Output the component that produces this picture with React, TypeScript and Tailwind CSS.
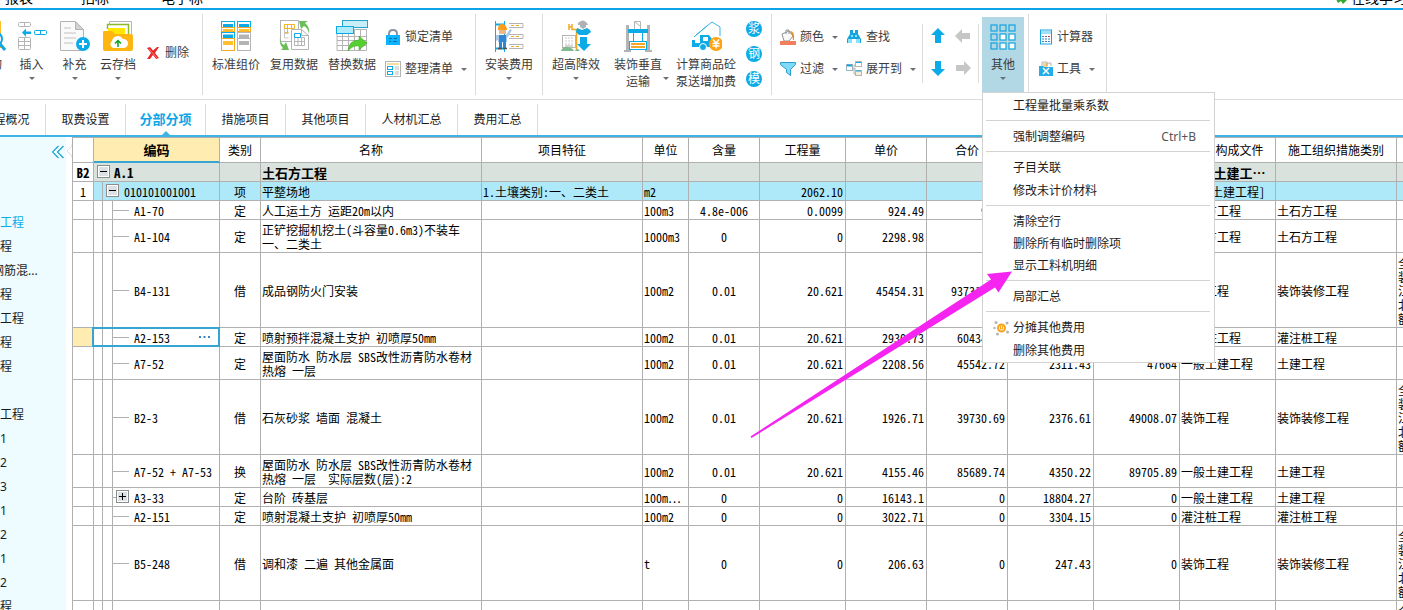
import { Fragment, type ReactNode } from "react";
import clsx from "clsx";

const ui = "font-['Noto_Sans','Noto_Sans_CJK_SC',sans-serif]";
const grid = "font-['Noto_Sans_Mono_CJK_SC','Noto_Sans_CJK_SC',monospace]";

/* ---------- icons ---------- */

const Svg = ({ w = 32, h = 32, children }: { w?: number; h?: number; children: ReactNode }) => (
  <svg width={w} height={h} viewBox={`0 0 ${w} ${h}`} fill="none" className="shrink-0" aria-hidden="true">
    {children}
  </svg>
);

const Caret = () => (
  <svg width="6" height="3" viewBox="0 0 6 3" className="shrink-0" aria-hidden="true">
    <path d="M0 0h6L3 3z" fill="#6b6f7a" />
  </svg>
);

const QueryIcon = () => (
  <Svg>
    <path d="M4 1h23v27H4z" fill="#ffc02e" />
    <circle cx="21" cy="19" r="7" fill="#fff" stroke="#12a5e0" strokeWidth="2" />
    <path d="M26 24l5 6" stroke="#12a5e0" strokeWidth="3" />
  </Svg>
);

const InsertIcon = () => (
  <Svg>
    <g stroke="#b4b4b4">
      <rect x="2.500" y="2.500" width="12" height="4" rx="1" />
      <path d="M8.500 2.500v4" />
      <rect x="2.500" y="17.500" width="12" height="12" rx="1" />
      <path d="M8.500 17.500v12M2.500 21.500h12M2.500 25.500h12" />
    </g>
    <path d="M6 12.500l4-4v3h5v2.500h-5v3z" fill="#0cabe8" />
    <rect x="18.500" y="10.500" width="12" height="4" rx="1" stroke="#0cabe8" />
    <path d="M24.500 10.500v4" stroke="#0cabe8" />
  </Svg>
);

const AppendIcon = () => (
  <Svg>
    <path d="M1.500 1.500h15l8 8v21h-23z" fill="#fafafa" stroke="#b4b4b4" />
    <path d="M16.500 1.500v8h8z" fill="#d2d2d2" stroke="#b4b4b4" />
    <path d="M5 8h7M5 13h12M5 18h12M5 23h9" stroke="#dedede" strokeWidth="2" />
    <circle cx="24" cy="24" r="7" fill="#0cabe8" />
    <path d="M20 24h8M24 20v8" stroke="#fff" strokeWidth="2" />
  </Svg>
);

const CloudIcon = () => (
  <Svg>
    <path d="M7.500 9V1.500h22V22" stroke="#b4b4b4" fill="#fff" />
    <path d="M5.500 9V4.500h21V20" stroke="#8cb82b" strokeWidth="1.500" fill="#fff" />
    <path d="M6 8h17v6H6z" fill="#ffe600" />
    <path d="M1 12q0-1 1-1h8l3 3h16q2 0 2 2v13q0 2-2 2H3q-2 0-2-2z" fill="#ffb510" />
    <path d="M11 28a4 4 0 0 1-1-7 6 6 0 0 1 11-2 4.500 4.500 0 0 1 1 9z" fill="#fff" />
    <path d="M16 27v-6M13 23.500l3-3 3 3" stroke="#14a01e" strokeWidth="1.500" />
  </Svg>
);

const RedCross = () => (
  <Svg w={12} h={12}>
    <path d="M0 1l3-1 3 3.500L10 0h2L8 6l4 5-3 1-3-4-3 4H0l4-6z" fill="#e8272a" />
    <path d="M2 2l8 9" stroke="#ff7460" />
  </Svg>
);

const StandardIcon = () => (
  <Svg>
    {[1.5, 17.5].map((x, i) => (
      <g key={x}>
        <rect x={x} y="1.500" width="13" height="6" stroke="#0cabe8" />
        <rect x={x + 1.5} y="4" width="10" height="3.500" fill="#0cabe8" />
        <rect x={x} y="7.500" width="13" height="4" stroke="#f5a623" />
        <rect x={x + 1.5} y="9" width="10" height="2.500" fill="#ffc02e" />
        <rect x={x} y="12.500" width="13" height="6" stroke={i ? "#b4b4b4" : "#0cabe8"} />
        <rect x={x + 1.5} y="14.500" width="10" height="3.500" fill={i ? "#b4b4b4" : "#0cabe8"} />
        <rect x={x} y="18.500" width="13" height="12" stroke={i ? "#b4b4b4" : "#f5a623"} />
        <rect x={x + 1.5} y="21" width="10" height="4" fill={i ? "#b4b4b4" : "#ffc02e"} />
      </g>
    ))}
  </Svg>
);

const ReuseIcon = () => (
  <Svg>
    <rect x="2.500" y="0.500" width="18" height="21" stroke="#b4b4b4" fill="#fff" />
    <path d="M6.500 4.500h10v4h-10zM6.500 4.500v8M9.500 4.500v8M13.500 4.500v4M6.500 12.500h4" stroke="#f5b32a" />
    <path d="M6.500 9v9h4M6.500 13.500h4" stroke="#c9c9c9" />
    <path d="M13.500 9.500h10l7 6v14h-17z" fill="#fff" stroke="#b4b4b4" />
    <path d="M23.500 9.500v6h7" stroke="#b4b4b4" />
    <path d="M16.500 17.500h10v8h-10zM20 17.500v8M23.500 17.500v8M16.500 21.500h10" stroke="#b4b4b4" />
    <path d="M16.500 13.500h6v4h-6z" stroke="#0cabe8" />
    <path d="M21 1h9l-3 2q5 4 4 11-1-6-5-8l-3 3z" fill="#6abf5b" />
    <path d="M2 17q0 6 4 8l2-3 3 8H3l2-2q-4-3-3-11z" fill="#6abf5b" />
  </Svg>
);

const ReplaceIcon = () => (
  <Svg w={34}>
    <path d="M2 9.500h29.500v21H2zM2 16.500h30M2 20.500h30M2 25.500h30M7.500 9v21M13.500 9v21M19.500 9v21M25.500 9v21" stroke="#b4b4b4" />
    <rect x="7.500" y="0.500" width="25" height="7" fill="#c9eef8" stroke="#25a3c8" />
    <rect x="1.500" y="6.500" width="17" height="7" fill="#aeebfb" stroke="#0cabe8" />
    <path d="M13 31q1-11 11-11v-4l8 7-8 7v-4q-6-1-11 5z" fill="#55d030" stroke="#3aa11c" strokeWidth="0.500" />
  </Svg>
);

const LockIcon = () => (
  <Svg w={16} h={16}>
    <path d="M4 8V5q0-4 4-4t4 4v3" stroke="#8a93a0" strokeWidth="2" />
    <rect x="1" y="6" width="14" height="10" fill="#0cb4ff" />
    <path d="M4 9.500h3M9 9.500h3M4 12.500h2M8 12.500h4" stroke="#0a6fa8" />
  </Svg>
);

const TidyIcon = () => (
  <Svg w={16} h={16}>
    <rect x="0.500" y="0.500" width="15" height="15" fill="#fff" stroke="#b4b4b4" />
    <path d="M2 3h12" stroke="#f5dfa0" strokeWidth="2" />
    <rect x="2.500" y="5.500" width="5" height="3" stroke="#0cabe8" />
    <rect x="2.500" y="10.500" width="5" height="3" stroke="#0cabe8" />
    <path d="M10 5h4v4h-4zM10 10h4v4h-4z" fill="#ddd" />
  </Svg>
);

const InstallIcon = () => (
  <Svg>
    <path d="M2.500 1v31M11.500 1v31" stroke="#0cabe8" />
    <path d="M2 4.500h10M2 28.500h10" stroke="#0cabe8" strokeWidth="2" />
    <path d="M16 3.500h14v4H16M16 14.500h14v4H16M16 24.500h14v4H16" stroke="#b4b4b4" />
    <path d="M18 5.500h3M23 5.500h3M18 16.500h3M23 16.500h3M18 26.500h3M23 26.500h3" stroke="#f5a623" />
    <path d="M5 9q0-5 4-5t5 5v1H5z" fill="#ff9d1c" />
    <path d="M6 10h7v4H6z" fill="#e7b98c" />
    <path d="M3 15h10l4-6 2 1-5 8v4H5v-2l-2 1z" fill="#a9c8e8" />
    <path d="M6 15h7v13h-3v-6H9v6H6z" fill="#2f86d3" />
    <path d="M5 28.500h4M10 28.500h4" stroke="#6b4a33" strokeWidth="1.500" />
  </Svg>
);

const HighIcon = () => (
  <Svg>
    <path d="M9 4v6M12 4v6M9 7h3M12 9.500h4.500V31" stroke="#f5a623" strokeWidth="1.500" />
    <rect x="2.500" y="15.500" width="13" height="12" fill="#fff" stroke="#b4b4b4" />
    <path d="M5 18h8M5 21h8M5 24h8" stroke="#c9c9c9" strokeDasharray="2 1" />
    <path d="M5 27h8v-2H5z" fill="#d6d6d6" />
    <path d="M1 31q2-5 7-4t6 4zM15 31q2-4 5 0z" fill="#7fb98e" />
    <path d="M18 3q5-5 9 0l1 2H18zM20 5h6v2l-3 2-3-2z" fill="#aeb2b5" />
    <path d="M17 8l5 2 5-2 3 2 1 2-4 3H19l-3-3z" fill="#0cabe8" />
    <path d="M20 17h7v7h4l-7 7-7-7h3z" fill="#0cabe8" />
  </Svg>
);

const VerticalIcon = () => (
  <Svg>
    <path d="M5.500 5v26M26.500 5v26" stroke="#b4b4b4" strokeWidth="3" />
    <path d="M2 31h7M23 31h7" stroke="#b4b4b4" strokeWidth="2" />
    <path d="M12.500 9V1.500h6V9M13 2l5 4" stroke="#b4b4b4" />
    <path d="M6 9h20v4H6z" fill="#0cabe8" />
    <path d="M11.500 12v10M20.500 12v10" stroke="#0cabe8" />
    <rect x="7.500" y="21.500" width="17" height="8" stroke="#0cabe8" fill="#fff" />
    <path d="M9 23h14v2H9zM9 26h14v2H9z" fill="#f5a623" />
  </Svg>
);

const PumpIcon = () => (
  <Svg>
    <path d="M6 15L22 2l8 5v9" stroke="#3ab5e0" />
    <path d="M4 17L18 5" stroke="#3ab5e0" />
    <path d="M2 20h3v3h5v-8h9l3 4v8H2z" fill="#0cabe8" />
    <path d="M13 17h5v4h-5z" fill="#fff" />
    <circle cx="13" cy="27" r="3.500" fill="#0cabe8" stroke="#fff" />
    <circle cx="26" cy="24" r="7" fill="#ffa312" />
    <path d="M23 19.500l3 3.500 3-3.500M26 23v5.500M22.500 23.500h7M22.500 26h7" stroke="#fff" strokeWidth="1.500" />
  </Svg>
);

const BucketIcon = () => (
  <Svg w={16} h={16}>
    <path d="M2 5l7-3 4 5-4 5H4z" fill="#fafafa" stroke="#8f9499" />
    <path d="M6 5V1h3v4" stroke="#8f9499" />
    <path d="M10 2q5 0 4 9h-1L12 6z" fill="#e0912f" />
    <path d="M0 12h16v4H0z" fill="#f47e5c" />
  </Svg>
);

const FunnelIcon = () => (
  <Svg w={16} h={16}>
    <path d="M0.500 1.500h15v2l-5 5v6l-4-3v-3l-6-5z" fill="#7fd9f7" stroke="#2a9cc9" />
  </Svg>
);

const BinocularsIcon = () => (
  <Svg w={16} h={16}>
    <path d="M4 1h3v3h2V1h3v4l3 5v4h-5v-4H6v4H1v-4l3-5z" fill="#12a5e0" />
    <path d="M2 10h4v4H2zM10 10h4v4h-4zM5 6h2v2H5zM9 6h2v2H9z" fill="#8ae1fa" />
  </Svg>
);

const ExpandIcon = () => (
  <Svg w={16} h={16}>
    <path d="M6 8h4M8 8V4h2M8 8v5h2" stroke="#b4b4b4" />
    <rect x="0.500" y="3.500" width="6" height="6" fill="#fff" stroke="#9fb3bf" />
    <rect x="9.500" y="0.500" width="6" height="5" fill="#fff" stroke="#b4b4b4" />
    <rect x="9.500" y="9.500" width="6" height="5" fill="#f7ecd8" stroke="#b4b4b4" />
    <path d="M1 4.500h5" stroke="#12a5e0" strokeWidth="2" />
    <path d="M10 10h5M10 1.500h5" stroke="#12a5e0" />
  </Svg>
);

const Arrow = ({ turn, color }: { turn: string; color: string }) => (
  <svg width="16" height="16" viewBox="0 0 16 16" className={turn} aria-hidden="true">
    <path d="M8 0l7 7h-4v8H5V7H1z" fill={color} />
  </svg>
);

const GridIcon = () => (
  <Svg w={26} h={26}>
    {[0, 9, 18].map((y) =>
      [0, 9, 18].map((x) => (
        <rect key={`${x}-${y}`} x={x + 1} y={y + 1} width="6" height="6" fill={x && y ? "#fff" : "none"} stroke="#12a5e0" strokeWidth="1.200" />
      ))
    )}
  </Svg>
);

const CalculatorIcon = () => (
  <Svg w={14} h={16}>
    <rect x="1.500" y="1" width="11" height="14" fill="#fff" stroke="#12a5e0" />
    <path d="M2 2h10v3H2z" fill="#9fe0f6" />
    <path d="M3 7.500h8M3 10h8M3 12.500h8" stroke="#3a7fc0" strokeDasharray="2 1" />
    <path d="M9 7h2v1H9z" fill="#e8272a" />
  </Svg>
);

const ToolsIcon = () => (
  <Svg w={14} h={16}>
    <path d="M3 5V1h5v4M8 5V2h4v3" fill="#fff" stroke="#b4b4b4" />
    <path d="M4 3h4M4 5h4" stroke="#f5a623" />
    <path d="M0 5h4l1 1h9v9H0z" fill="#22aee6" />
    <path d="M4 7l6 6M10 7l-6 6" stroke="#fff" strokeWidth="1.500" />
  </Svg>
);

const CoinIcon = () => (
  <Svg w={16} h={16}>
    <circle cx="8.500" cy="8" r="3.500" fill="#fff4d8" stroke="#f9a11b" strokeWidth="2" />
    <path d="M7.500 6v3h2V6" stroke="#f9a11b" />
    <g fill="#b4b4b4">
      <circle cx="3" cy="2.500" r="1.500" />
      <circle cx="14" cy="3" r="1.500" />
      <circle cx="1.500" cy="8" r="1.200" />
      <circle cx="14.500" cy="12" r="1.500" />
      <circle cx="4.500" cy="14" r="1.500" />
    </g>
  </Svg>
);

/* ---------- ribbon ---------- */

const BigButton = ({ icon, label, width = "w-[58px]", caret = false }: { icon: ReactNode; label: string; width?: string; caret?: boolean }) => (
  <button type="button" className={clsx("flex shrink-0 flex-col items-center overflow-hidden pt-2.5 text-[#3c3c3c]", width)}>
    {icon}
    <span className="mt-1 whitespace-pre text-center leading-[17px]">{label}</span>
    {caret && <span className="mt-1"><Caret /></span>}
  </button>
);

const SmallButton = ({ icon, label, caret = false }: { icon: ReactNode; label: string; caret?: boolean }) => (
  <button type="button" className="flex h-8 items-center gap-1 whitespace-nowrap text-[#3c3c3c]">
    {icon}
    {label}
    {caret && <span className="ml-1"><Caret /></span>}
  </button>
);

const Divider = ({ short = false }: { short?: boolean }) => (
  <div className={clsx("w-px shrink-0 bg-[#dcdcdc]", short ? "mt-3.5 mb-4" : "my-1")} />
);

const Stack = ({ children }: { children: ReactNode }) => (
  <div className="flex shrink-0 flex-col pt-[11px]">{children}</div>
);

const menuGroups = [
  { items: [{ label: "工程量批量乘系数" }] },
  { items: [{ label: "强制调整编码", keys: "Ctrl+B" }] },
  { items: [{ label: "子目关联" }, { label: "修改未计价材料" }], gap: "gap-px" },
  { items: [{ label: "清除空行" }, { label: "删除所有临时删除项" }, { label: "显示工料机明细" }] },
  { items: [{ label: "局部汇总" }] },
  { items: [{ label: "分摊其他费用", icon: <CoinIcon /> }, { label: "删除其他费用" }], gap: "gap-px" },
] as { items: { label: string; keys?: string; icon?: ReactNode }[]; gap?: string }[];

const OtherMenu = () => (
  <div role="menu" className="absolute top-full left-0 z-20 w-[233px] border border-[#d2d2d2] bg-white pr-0.5">
    {menuGroups.map(({ items, gap }, i) => (
      <Fragment key={i}>
        {i > 0 && <div className="ml-[3px] mr-0.5 h-px bg-[#d2d2d2]" />}
        <div className={clsx("flex flex-col py-1 first:pt-px last:pb-px", gap)}>
          {items.map(({ label, keys, icon }) => (
            <button key={label} type="button" role="menuitem" className="flex h-[22px] items-center pt-0.5 pr-4 text-[#1c1c1c]">
              <span className="flex w-[30px] justify-end pr-1">{icon}</span>
              {label}
              {keys && <span className="ml-auto text-[#555]">{keys}</span>}
            </button>
          ))}
        </div>
      </Fragment>
    ))}
  </div>
);

const Ribbon = () => (
  <div className="flex h-[90px] border-b border-[#dcdcdc] bg-white">
    <div className="flex w-2.5 shrink-0 justify-end overflow-hidden">
      <BigButton icon={<QueryIcon />} label="查询" width="w-10" />
    </div>
    <BigButton icon={<InsertIcon />} label="插入" width="w-[43px]" caret />
    <BigButton icon={<AppendIcon />} label="补充" width="w-[43px]" caret />
    <BigButton icon={<CloudIcon />} label="云存档" width="w-11" caret />
    <div className="flex w-[62px] shrink-0 items-start pt-[27px] pl-[7px]">
      <button type="button" className="flex h-8 items-center gap-1.5 text-[#3c3c3c]">
        <RedCross />
        删除
      </button>
    </div>
    <Divider />
    <div className="flex shrink-0 pl-1">
      <BigButton icon={<StandardIcon />} label="标准组价" />
      <BigButton icon={<ReuseIcon />} label="复用数据" />
      <BigButton icon={<ReplaceIcon />} label="替换数据" />
      <div className="w-[94px] pl-1">
        <Stack>
          <SmallButton icon={<LockIcon />} label="锁定清单" />
          <SmallButton icon={<TidyIcon />} label="整理清单" caret />
        </Stack>
      </div>
    </div>
    <Divider />
    <BigButton icon={<InstallIcon />} label="安装费用" width="w-[66px]" caret />
    <Divider />
    <BigButton icon={<HighIcon />} label="超高降效" width="w-[66px]" caret />
    <div className="flex shrink-0 items-start">
      <BigButton icon={<VerticalIcon />} label={"装饰垂直\n运输"} />
      <span className="-ml-1 pt-[67px]"><Caret /></span>
    </div>
    <BigButton icon={<PumpIcon />} label={"计算商品砼\n泵送增加费"} width="w-[74px]" />
    <div className="flex w-7 shrink-0 flex-col items-center gap-[9px] pt-[11px] pr-1.5">
      {["浆", "钢", "模"].map((c) => (
        <button key={c} type="button" className="flex size-4 items-center justify-center rounded-full bg-[#0cabe8] leading-4 text-white">
          {c}
        </button>
      ))}
    </div>
    <Divider />
    <div className="flex w-[150px] shrink-0 gap-2 pl-2">
      <Stack>
        <SmallButton icon={<BucketIcon />} label="颜色" caret />
        <SmallButton icon={<FunnelIcon />} label="过滤" caret />
      </Stack>
      <Stack>
        <SmallButton icon={<BinocularsIcon />} label="查找" />
        <SmallButton icon={<ExpandIcon />} label="展开到" caret />
      </Stack>
    </div>
    <Divider short />
    <div className="grid w-[55px] shrink-0 grid-cols-2 grid-rows-[32px_32px] place-items-center px-0.5 pt-2.5">
      <button type="button" aria-label="上移"><Arrow turn="" color="#0cabe8" /></button>
      <button type="button" aria-label="升级"><Arrow turn="-rotate-90" color="#c6c6c6" /></button>
      <button type="button" aria-label="下移"><Arrow turn="rotate-180" color="#0cabe8" /></button>
      <button type="button" aria-label="降级"><Arrow turn="rotate-90" color="#c6c6c6" /></button>
    </div>
    <Divider short />
    <div className="relative ml-[3px] mt-[7px] h-[75px] shrink-0">
      <button type="button" aria-haspopup="menu" className="flex h-full w-[42px] flex-col items-center bg-[#b1d8e4] pt-[7px] text-[#3c3c3c]">
        <GridIcon />
        <span className="mt-1.5 leading-[17px]">其他</span>
        <span className="mt-1"><Caret /></span>
      </button>
      <OtherMenu />
    </div>
    <span className="w-1 shrink-0" />
    <Divider />
    <div className="w-[77px] shrink-0 pl-2.5">
      <Stack>
        <SmallButton icon={<CalculatorIcon />} label="计算器" />
        <SmallButton icon={<ToolsIcon />} label="工具" caret />
      </Stack>
    </div>
    <Divider />
  </div>
);

/* ---------- tabs ---------- */

const tabs = ["工程概况", "取费设置", "分部分项", "措施项目", "其他项目", "人材机汇总", "费用汇总"];

const Tabs = () => (
  <nav className="flex h-[37px] border-b-2 border-[#3eb4e4] bg-white pt-1">
    <div className="-ml-[34px] flex">
      {tabs.map((t) => (
        <a
          key={t}
          href="#"
          className={clsx(
            "relative flex items-center justify-center border-r border-[#dcdcdc]",
            t.length > 4 ? "w-[92px]" : "w-20",
            t === "分部分项" ? "text-[13px] font-bold text-[#0ca6e6]" : "text-[#1c1c1c]"
          )}
        >
          {t}
          {t === "分部分项" && (
            <svg width="8" height="4" viewBox="0 0 8 4" className="absolute bottom-0 left-9" aria-hidden="true">
              <path d="M4 0l4 4H0z" fill="#3eb4e4" />
            </svg>
          )}
        </a>
      ))}
    </div>
  </nav>
);

/* ---------- sidebar ---------- */

const tree = ["工程", "程", "钢筋混...", "程", "工程", "程", "程", "", "工程", "1", "2", "3", "1", "2", "1", "2", "程"];

const Sidebar = () => (
  <aside className="flex w-[72px] shrink-0 bg-white">
    <div className="flex w-[66px] flex-col overflow-hidden bg-[#effcff]">
      <button type="button" aria-label="收起" className="mt-2 mr-0.5 self-end">
        <svg width="12" height="14" viewBox="0 0 12 14" fill="none" stroke="#1aa0c8" strokeWidth="1.200">
          <path d="M6.500 1l-6 6 6 6M11.500 1l-6 6 6 6" />
        </svg>
      </button>
      <ul className="mt-[52px]">
        {tree.map((t, i) => (
          <li key={i} className={clsx("h-6 whitespace-nowrap leading-6", i === 0 ? "text-[#0cabe8]" : "text-[#1c1c1c]", t.endsWith("...") && "-ml-2")}>
            {t}
          </li>
        ))}
      </ul>
    </div>
    <svg width="6" height="16" viewBox="0 0 6 16" fill="none" className="mt-1.5" aria-hidden="true">
      <path d="M6 1v2L1 8l5 5v2" stroke="#dcdcdc" fill="#fff" />
    </svg>
  </aside>
);

/* ---------- grid ---------- */

const columns = [
  { title: "", width: 21, align: "text-center" },
  { title: "编码", width: 126, align: "" },
  { title: "类别", width: 41, align: "text-center" },
  { title: "名称", width: 221, align: "pl-px" },
  { title: "项目特征", width: 161, align: "pl-px" },
  { title: "单位", width: 46, align: "pl-px" },
  { title: "含量", width: 71, align: "text-center" },
  { title: "工程量", width: 86, align: "text-right pr-0.5" },
  { title: "单价", width: 81, align: "text-right pr-0.5" },
  { title: "合价", width: 81, align: "text-right pr-0.5" },
  { title: "综合单价", width: 86, align: "text-right pr-0.5" },
  { title: "综合合价", width: 86, align: "text-right pr-0.5" },
  { title: "费用构成文件", width: 96, align: "pl-px" },
  { title: "施工组织措施类别", width: 121, align: "pl-px" },
  { title: "", width: 60, align: "pl-px" },
];

type Row = {
  no?: string;
  level: number;
  height: string;
  toggle?: "+" | "-";
  tone?: string;
  selected?: boolean;
  cells: string[];
};

const note = "全\n装\n江\n北\n额";

const rows: Row[] = [
  { no: "B2", level: 0, height: "h-[19px]", toggle: "-", tone: "bg-[#d9e2dd] font-bold text-[13px]", cells: ["A.1", "", "土石方工程", "", "", "", "", "", "", "", "", "建筑[土建工⋯", "", ""] },
  { no: "1", level: 1, height: "h-[19px]", toggle: "-", tone: "bg-[#aee9fa]", cells: ["010101001001", "项", "平整场地", "1.土壤类别:一、二类土", "m2", "", "2062.10", "", "", "", "", "建筑[土建工程]", "", ""] },
  { level: 2, height: "h-[19px]", cells: ["A1-70", "定", "人工运土方 运距20m以内", "", "100m3", "4.8e-006", "0.0099", "924.49", "9.15", "", "", "土石方工程", "土石方工程", ""] },
  { level: 2, height: "h-[33px]", cells: ["A1-104", "定", "正铲挖掘机挖土(斗容量0.6m3)不装车\n一、二类土", "", "1000m3", "0", "0", "2298.98", "0", "", "", "土石方工程", "土石方工程", ""] },
  { level: 2, height: "h-[75px]", cells: ["B4-131", "借", "成品钢防火门安装", "", "100m2", "0.01", "20.621", "45454.31", "937313.33", "", "", "装饰工程", "装饰装修工程", note] },
  { level: 2, height: "h-[19px]", selected: true, cells: ["A2-153", "定", "喷射预拌混凝土支护 初喷厚50mm", "", "100m2", "0.01", "20.621", "2930.73", "60434.58", "", "", "灌注桩工程", "灌注桩工程", ""] },
  { level: 2, height: "h-[33px]", cells: ["A7-52", "定", "屋面防水 防水层 SBS改性沥青防水卷材\n热熔 一层", "", "100m2", "0.01", "20.621", "2208.56", "45542.72", "2311.43", "47664", "一般土建工程", "土建工程", ""] },
  { level: 2, height: "h-[75px]", cells: ["B2-3", "借", "石灰砂浆 墙面 混凝土", "", "100m2", "0.01", "20.621", "1926.71", "39730.69", "2376.61", "49008.07", "装饰工程", "装饰装修工程", note] },
  { level: 2, height: "h-[33px]", cells: ["A7-52 + A7-53", "换", "屋面防水 防水层 SBS改性沥青防水卷材\n热熔 一层  实际层数(层):2", "", "100m2", "0.01", "20.621", "4155.46", "85689.74", "4350.22", "89705.89", "一般土建工程", "土建工程", ""] },
  { level: 2, height: "h-[19px]", toggle: "+", cells: ["A3-33", "定", "台阶 砖基层", "", "100m⋯", "0", "0", "16143.1", "0", "18804.27", "0", "一般土建工程", "土建工程", ""] },
  { level: 2, height: "h-[19px]", cells: ["A2-151", "定", "喷射混凝土支护 初喷厚50mm", "", "100m2", "0", "0", "3022.71", "0", "3304.15", "0", "灌注桩工程", "灌注桩工程", ""] },
  { level: 2, height: "h-[75px]", cells: ["B5-248", "借", "调和漆 二遍 其他金属面", "", "t", "0", "0", "206.63", "0", "247.43", "0", "装饰工程", "装饰装修工程", note] },
  { level: 2, height: "h-[75px]", cells: ["", "", "", "", "", "", "", "", "", "", "", "", "", note] },
];

const indent = ["pl-5", "pl-[30px]", "pl-10"];
const toggleAt = ["left-[3px]", "left-3", "left-[22px]"];

const CodeCell = ({ row }: { row: Row }) => (
  <td className={clsx("relative border-r border-b border-[#b0b0b0] p-0 pt-px", indent[row.level], row.tone)}>
    {row.level > 0 && <span className="absolute inset-y-0 left-2 w-px bg-[#b0b0b0]" />}
    {row.level > 1 && <span className="absolute inset-y-0 left-[18px] w-px bg-[#b0b0b0]" />}
    {row.level > 1 && row.cells[0] && <span className="absolute top-1/2 left-[19px] h-px w-4 bg-[#b0b0b0]" />}
    {row.toggle && (
      <button type="button" aria-label={row.toggle === "+" ? "展开" : "折叠"} className={clsx("absolute top-0.5", toggleAt[row.level])}>
        <svg width="13" height="13" viewBox="0 0 13 13">
          <rect x="0.500" y="0.500" width="12" height="12" fill="#fff" stroke="#8c8c8c" />
          <rect x="2" y="2" width="9" height="9" fill="#dcdfe4" />
          <path d={row.toggle === "+" ? "M3 6.500h7M6.500 3v7" : "M3 6.500h7"} stroke="#000" />
        </svg>
      </button>
    )}
    {row.cells[0]}
    {row.selected && (
      <span className="absolute -top-px -right-px -bottom-px -left-0.5 flex items-center justify-end border-2 border-[#36a5d4] pr-2">
        <svg width="11" height="2" viewBox="0 0 11 2" fill="#3a86c8" aria-hidden="true">
          <path d="M0 0h2v2H0zM4.500 0h2v2h-2zM9 0h2v2H9z" />
        </svg>
      </span>
    )}
  </td>
);

const Grid = () => (
  <main className={clsx("min-w-0 flex-1 overflow-hidden border-t border-l border-[#b0b0b0]", grid)}>
    <table className="w-[1384px] table-fixed border-separate border-spacing-0 text-xs text-black">
      <colgroup>
        {columns.map((c, i) => (
          <col key={i} style={{ width: c.width }} />
        ))}
      </colgroup>
      <thead>
        <tr className="h-[25px]">
          {columns.map((c, i) => (
            <th
              key={i}
              className={clsx(
                "border-r p-0 whitespace-nowrap border-r-[#b0b0b0]",
                c.title === "编码" ? "border-b-2 border-b-[#36a5d4] bg-[#ffecb0] text-[13px] font-bold" : "border-b border-b-[#b0b0b0] font-normal"
              )}
            >
              {c.title}
            </th>
          ))}
        </tr>
      </thead>
      <tbody>
        {rows.map((row, r) => (
          <tr key={r} className={clsx("leading-[14px]", row.height)}>
            <th className={clsx("border-r border-b border-[#b0b0b0] p-0 pt-px", row.selected && "bg-[#ffecb0]", r === 0 ? "text-[13px] font-bold" : "font-normal")}>
              {row.no}
            </th>
            <CodeCell row={row} />
            {row.cells.slice(1).map((cell, i) => (
              <td key={i} className={clsx("overflow-hidden border-r border-b border-[#b0b0b0] p-0 pt-px whitespace-pre", columns[i + 2].align, row.tone)}>
                {cell}
              </td>
            ))}
          </tr>
        ))}
      </tbody>
    </table>
  </main>
);

const Pointer = () => (
  <svg width="264" height="170" viewBox="0 0 264 170" className="pointer-events-none absolute top-[270px] left-[750px] z-30" aria-hidden="true">
    <path d="M0.500 166.500L241 9.500 237 4 262 1.500 248.500 22.500 245 17.500 1.500 168z" fill="#f524f0" />
  </svg>
);

export default function App() {
  return (
    <div className={clsx("relative flex h-screen flex-col overflow-hidden bg-white text-xs", ui)}>
      <header className="flex h-2.5 shrink-0 items-end overflow-hidden border-b-2 border-[#0ca4e8] pl-[5px] text-sm text-black">
        <div className="flex gap-12 pb-[3px] leading-[14px]">
          <a href="#">报表</a>
          <a href="#">招标</a>
          <a href="#" className="pl-1">电子标</a>
        </div>
        <a href="#" className="-mr-1 ml-auto flex items-center gap-1 pb-[3px] leading-[14px]">
          <svg width="12" height="12" viewBox="0 0 12 12" aria-hidden="true">
            <path d="M1 7l4-5 6 2 1 4-4 4-2-3-3 2z" fill="#2fa82c" />
          </svg>
          在线学习
        </a>
      </header>
      <Ribbon />
      <Tabs />
      <div className="flex min-h-0 flex-1">
        <Sidebar />
        <Grid />
      </div>
      <Pointer />
    </div>
  );
}
